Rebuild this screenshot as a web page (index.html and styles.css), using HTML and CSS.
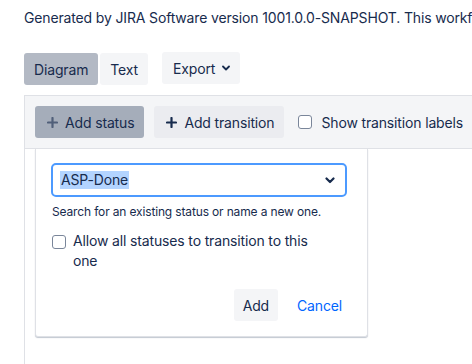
FILE: index.html
```html
<!DOCTYPE HTML>
<html>
<head>
  <title>Workflow</title>
  <meta name="viewport" content="width=device-width, initial-scale=1">
  <link rel="stylesheet" href="styles.css">
</head>
<body>
  <p class="generated">Generated by JIRA Software version 1001.0.0-SNAPSHOT. This workflow was last edited by admin</p>

  <div class="view-bar">
    <div class="btn-group">
      <button class="btn btn-selected">Diagram</button>
      <button class="btn">Text</button>
    </div>
    <button class="btn btn-export">Export
      <svg width="8" height="6" viewBox="0 0 8 6"><path d="M1 1.5 L4 4.5 L7 1.5" fill="none" stroke="#172b4d" stroke-width="1.8" stroke-linecap="round" stroke-linejoin="round"/></svg>
    </button>
  </div>

  <div class="designer">
    <div class="toolbar">
      <button class="btn btn-tool btn-active">
        <svg width="11" height="11" viewBox="0 0 11 11"><path d="M5.5 1 V10 M1 5.5 H10" stroke="#505f79" stroke-width="2.2" stroke-linecap="round"/></svg>
        Add status
      </button>
      <button class="btn btn-tool">
        <svg width="11" height="11" viewBox="0 0 11 11"><path d="M5.5 1 V10 M1 5.5 H10" stroke="#172b4d" stroke-width="2.2" stroke-linecap="round"/></svg>
        Add transition
      </button>
      <label class="check-label"><span class="checkbox"></span>Show transition labels</label>
    </div>

    <div class="canvas">
      <div class="add-dialog">
        <div class="status-select">
          <span class="selected-text">ASP-Done</span>
          <svg width="10" height="7" viewBox="0 0 10 7"><path d="M1.5 1.5 L5 5 L8.5 1.5" fill="none" stroke="#172b4d" stroke-width="2.2" stroke-linecap="round" stroke-linejoin="round"/></svg>
        </div>
        <div class="help">Search for an existing status or name a new one.</div>
        <label class="check-label allow"><span class="checkbox"></span><span>Allow all statuses to transition to this one</span></label>
        <div class="dialog-buttons">
          <button class="btn btn-add">Add</button>
          <a class="cancel" href="#">Cancel</a>
        </div>
      </div>
    </div>
  </div>
</body>
</html>
```

FILE: styles.css
```css
body {
  font-family: Inter, "Noto Sans", sans-serif;
  font-size: 14px;
  letter-spacing: -0.15px;
  color: #172b4d;
  margin: 0;
  padding: 8px 0 0 24px;
  background-color: #fff;
  overflow: hidden;
  height: 356px;
}

.generated {
  margin: 0;
  line-height: 20px;
  white-space: nowrap;
}

.view-bar {
  display: flex;
  align-items: flex-start;
  margin-top: 24px;
  gap: 14px;
}

.btn-group {
  display: flex;
  gap: 2px;
  margin-top: 1px;
}

.btn {
  font-family: inherit;
  font-size: 14px;
  letter-spacing: inherit;
  color: #172b4d;
  height: 32px;
  padding: 0 10px;
  border: none;
  border-radius: 3px;
  background-color: #f4f5f7;
  display: flex;
  align-items: center;
  gap: 7px;
}

.btn-selected {
  background-color: #b3b9c4;
}

.btn-export {
  padding: 0 10px 0 11px;
}

.designer {
  margin-top: 10px;
  border-left: 1px solid #dfe1e6;
  height: 269px;
  position: relative;
}

.toolbar {
  display: flex;
  align-items: center;
  gap: 10px;
  padding: 10px 10px;
  background-color: #f4f5f7;
  border-top: 1px solid #dfe1e6;
  border-bottom: 1px solid #dfe1e6;
  white-space: nowrap;
}

.btn-tool {
  background-color: #ebecf0;
  padding: 0 10px 0 12px;
}

.btn-active {
  background-color: #a5adba;
}

.check-label {
  display: flex;
  align-items: center;
  gap: 9px;
  margin-left: 4px;
  color: #172b4d;
}

.checkbox {
  width: 12px;
  height: 12px;
  border: 1px solid #7a869a;
  border-radius: 3px;
  background-color: #fff;
  flex: none;
}

.canvas {
  position: relative;
}

.add-dialog {
  position: absolute;
  left: 10px;
  top: 0;
  width: 296px;
  padding: 14px 20px 15px 15px;
  background-color: #fff;
  border: 1px solid #dfe1e6;
  border-top: none;
  border-radius: 0 0 3px 3px;
  box-shadow: 0 1px 1px rgba(9, 30, 66, 0.25);
}

.status-select {
  width: 296px;
  height: 34px;
  box-sizing: border-box;
  border: 2px solid #4c9aff;
  border-radius: 5px;
  display: flex;
  align-items: center;
  justify-content: space-between;
  padding: 0 10px 0 7px;
}

.selected-text {
  background-color: #b3d4ff;
  line-height: 18px;
  padding: 0 1px;
}

.help {
  font-size: 12px;
  line-height: 16px;
  margin-top: 7px;
  margin-left: 1px;
}

.allow {
  align-items: flex-start;
  margin: 11px 0 0 1px;
  line-height: 20px;
  gap: 7px;
  width: 270px;
}

.allow .checkbox {
  margin-top: 4px;
}

.dialog-buttons {
  display: flex;
  justify-content: flex-end;
  align-items: center;
  gap: 19px;
  margin-top: 18px;
  padding-right: 5px;
}

.btn-add {
  padding: 0 9px;
}

.cancel {
  color: #0065ff;
  text-decoration: none;
}
```
